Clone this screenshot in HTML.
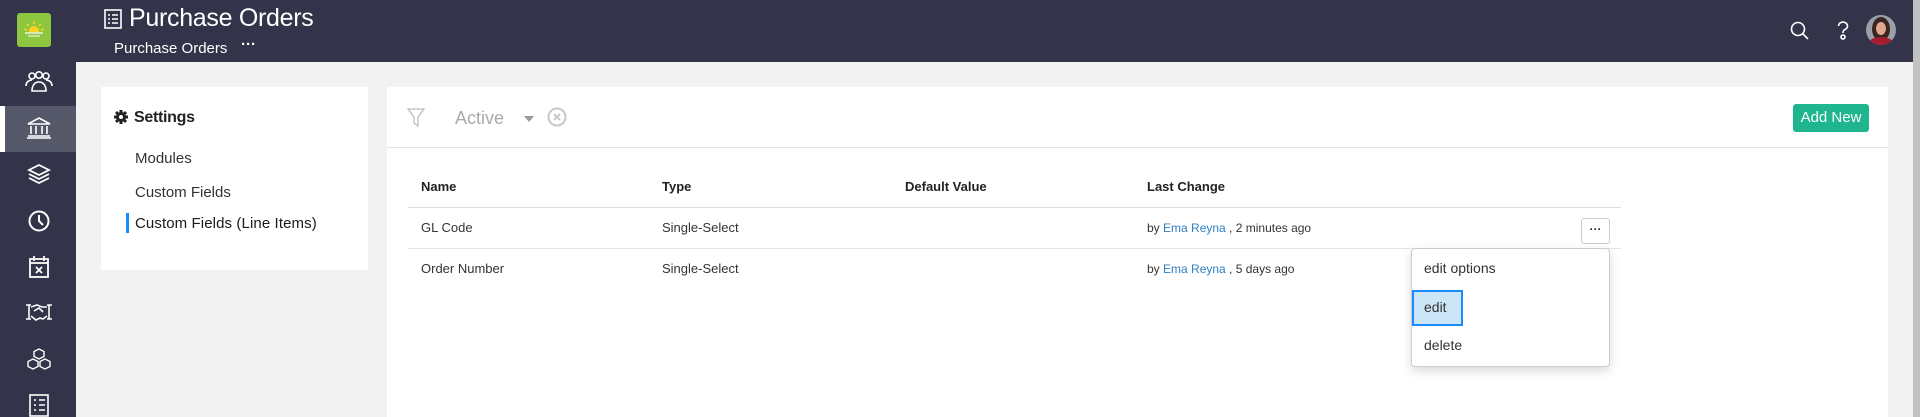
<!DOCTYPE html>
<html><head><meta charset="utf-8"><style>
*{margin:0;padding:0;box-sizing:border-box}
body{width:1920px;height:417px;overflow:hidden;background:#f2f2f2;font-family:"Liberation Sans",sans-serif;position:relative;color:#333}
.a{position:absolute}
.side{left:0;top:0;width:76px;height:417px;background:#33334a}
.hdr{left:0;top:0;width:1913px;height:62px;background:#33334a}
.t{position:absolute;white-space:nowrap}
</style></head><body>
<div class="a hdr"></div>
<div class="a side"></div>
<div class="a" style="left:17px;top:13px;width:34px;height:34px;background:#8dc63f;border-radius:3px"></div>
<svg class="a" style="left:22px;top:20px" width="24" height="20" viewBox="0 0 24 20"><circle cx="12" cy="11" r="5" fill="#ffd21f"/><g stroke="#ffd21f" stroke-width="1.5"><line x1="12" y1="1" x2="12" y2="4"/><line x1="5" y1="4" x2="7" y2="6"/><line x1="19" y1="4" x2="17" y2="6"/><line x1="2" y1="9" x2="5" y2="10"/><line x1="22" y1="9" x2="19" y2="10"/></g><rect x="2" y="12" width="20" height="8" fill="#8dc63f"/><line x1="3" y1="13" x2="21" y2="13" stroke="#fff" stroke-width="1.2"/><line x1="6" y1="16" x2="18" y2="16" stroke="#fff" stroke-width="1"/></svg>
<div class="a" style="left:0;top:106px;width:76px;height:46px;background:#545869"></div>
<div class="a" style="left:0;top:106px;width:5px;height:46px;background:#fff"></div>
<svg class="a" style="left:24px;top:71px" width="30" height="24" viewBox="0 0 30 24" fill="none" stroke="#fff" stroke-width="1.6"><circle cx="8" cy="5" r="3"/><circle cx="15" cy="4" r="3.2"/><circle cx="22" cy="5" r="3"/><path d="M2 15c0-4 3-6 6-6M28 15c0-4-3-6-6-6M8 20c0-6 3-9 7-9s7 3 7 9z"/></svg>
<svg class="a" style="left:26px;top:117px" width="26" height="22" viewBox="0 0 26 22" fill="none" stroke="#fff" stroke-width="1.6"><path d="M2 7L13 1l11 6z"/><path d="M5 9v8M10 9v8M16 9v8M21 9v8M2 19h22M1 21h24"/></svg>
<svg class="a" style="left:27px;top:163px" width="24" height="22" viewBox="0 0 24 22" fill="none" stroke="#fff" stroke-width="1.8"><path d="M12 2l10 5-10 5L2 7z"/><path d="M2 11l10 5 10-5M2 15l10 5 10-5"/></svg>
<svg class="a" style="left:27px;top:209px" width="24" height="24" viewBox="0 0 24 24" fill="none" stroke="#fff" stroke-width="2"><circle cx="12" cy="12" r="9.5"/><path d="M12 6v6l4 4"/></svg>
<svg class="a" style="left:28px;top:255px" width="22" height="24" viewBox="0 0 22 24" fill="none" stroke="#fff" stroke-width="1.8"><rect x="2" y="4" width="18" height="18"/><path d="M6 1v5M16 1v5M2 8h18M8 12l6 6M14 12l-6 6"/></svg>
<svg class="a" style="left:25px;top:302px" width="28" height="20" viewBox="0 0 28 20" fill="none" stroke="#fff" stroke-width="1.6"><path d="M1 3h5M1 17h5M4 3v14M22 3h5M22 17h5M24 3v14M6 5l6-2 5 2 5 0M6 14l5 4 4-2 3 1 4-3M9 9l5-3 4 4"/></svg>
<svg class="a" style="left:27px;top:348px" width="24" height="22" viewBox="0 0 24 22" fill="none" stroke="#fff" stroke-width="1.4"><path d="M12 1l5 2.5v5L12 11 7 8.5v-5zM6 11l5 2.5v5L6 21 1 18.5v-5zM18 11l5 2.5v5L18 21l-5-2.5v-5z"/></svg>
<svg class="a" style="left:29px;top:394px" width="20" height="23" viewBox="0 0 20 23" fill="none" stroke="#fff" stroke-width="1.6"><rect x="1" y="1" width="18" height="21"/><path d="M5 6h2M10 6h6M5 11h2M10 11h6M5 16h2M10 16h6"/></svg>

<svg class="a" style="left:104px;top:9px" width="18" height="20" viewBox="0 0 18 20" fill="none" stroke="#fff" stroke-width="1.6"><rect x="1" y="1" width="16" height="18"/><path d="M4 6h2M8 6h6M4 10h2M8 10h6M4 14h2M8 14h6"/></svg>
<div class="t" style="left:129px;top:4px;font-size:25px;color:#fff;letter-spacing:-0.3px">Purchase Orders</div>
<div class="t" style="left:114px;top:40px;font-size:15px;color:#fff">Purchase Orders</div>
<div class="t" style="left:241px;top:36px;font-size:15px;color:#fff;font-weight:bold;letter-spacing:0px">···</div>
<svg class="a" style="left:1790px;top:21px" width="20" height="20" viewBox="0 0 20 20" fill="none" stroke="#fff" stroke-width="1.6"><circle cx="8" cy="8" r="6.5"/><path d="M13 13l5 5"/></svg>
<svg class="a" style="left:1836px;top:21px" width="14" height="20" viewBox="0 0 14 20" fill="none" stroke="#fff" stroke-width="1.6"><path d="M2.5 5a4.5 4 0 1 1 6 3.8C7 9.5 7 11 7 12"/><circle cx="7" cy="16" r="2"/></svg>
<div class="a" style="left:1866px;top:15px;width:30px;height:30px;border-radius:50%;overflow:hidden;background:#9aa0a8">
<div class="a" style="left:6px;top:2px;width:18px;height:24px;border-radius:50%;background:#3a2520"></div>
<div class="a" style="left:10px;top:7px;width:10px;height:13px;border-radius:50%;background:#e0a98e"></div>
<div class="a" style="left:3px;top:22px;width:24px;height:12px;border-radius:50%;background:#a51c2c"></div>
</div>
<div class="a" style="left:1913px;top:0;width:7px;height:417px;background:#c1c1c1"></div>

<div class="a" style="left:101px;top:87px;width:267px;height:183px;background:#fff"></div>
<svg class="a" style="left:114px;top:110px" width="14" height="14" viewBox="0 0 14 14"><circle cx="7" cy="7" r="5" fill="#222"/><g stroke="#222" stroke-width="3"><line x1="7" y1="0" x2="7" y2="14"/><line x1="0" y1="7" x2="14" y2="7"/><line x1="2" y1="2" x2="12" y2="12"/><line x1="12" y1="2" x2="2" y2="12"/></g><circle cx="7" cy="7" r="2" fill="#fff"/></svg>
<div class="t" style="left:134px;top:109px;font-size:16px;color:#222;font-weight:bold;letter-spacing:-0.3px">Settings</div>
<div class="t" style="left:135px;top:150px;font-size:15px;color:#333">Modules</div>
<div class="t" style="left:135px;top:184px;font-size:15px;color:#333">Custom Fields</div>
<div class="a" style="left:126px;top:213px;width:3px;height:20px;background:#1a8cff"></div>
<div class="t" style="left:135px;top:215px;font-size:15px;color:#1a1a1a;letter-spacing:0.1px">Custom Fields (Line Items)</div>

<div class="a" style="left:387px;top:87px;width:1501px;height:330px;background:#fff"></div>
<div class="a" style="left:387px;top:147px;width:1501px;height:1px;background:#e5e5e5"></div>
<svg class="a" style="left:407px;top:108px" width="18" height="20" viewBox="0 0 18 20" fill="none" stroke="#bbb" stroke-width="1.3"><path d="M1 1h16l-6 8v9l-4-3V9z"/></svg>
<div class="t" style="left:455px;top:108px;font-size:18px;color:#aaa">Active</div>
<svg class="a" style="left:524px;top:116px" width="10" height="6"><path d="M0 0h10L5 6z" fill="#999"/></svg>
<svg class="a" style="left:547px;top:107px" width="20" height="20" viewBox="0 0 20 20" fill="none" stroke="#c8c8c8" stroke-width="2"><circle cx="10" cy="10" r="8.5"/><path d="M7 7l6 6M13 7l-6 6"/></svg>
<div class="a" style="left:1793px;top:104px;width:76px;height:28px;background:#1fb58f;border-radius:3px;color:#fff;font-size:15px;text-align:center;line-height:28px">Add New</div>

<div class="t" style="left:421px;top:179px;font-size:13px;color:#222;font-weight:bold">Name</div>
<div class="t" style="left:662px;top:179px;font-size:13px;color:#222;font-weight:bold">Type</div>
<div class="t" style="left:905px;top:179px;font-size:13px;color:#222;font-weight:bold">Default Value</div>
<div class="t" style="left:1147px;top:179px;font-size:13px;color:#222;font-weight:bold">Last Change</div>
<div class="a" style="left:408px;top:207px;width:1213px;height:1px;background:#ddd"></div>
<div class="t" style="left:421px;top:220px;font-size:13px">GL Code</div>
<div class="t" style="left:662px;top:220px;font-size:13px">Single-Select</div>
<div class="t" style="left:1147px;top:221px;font-size:12px">by <span style="color:#2f7fc1">Ema Reyna</span> , 2 minutes ago</div>
<div class="a" style="left:408px;top:248px;width:1213px;height:1px;background:#e5e5e5"></div>
<div class="t" style="left:421px;top:261px;font-size:13px">Order Number</div>
<div class="t" style="left:662px;top:261px;font-size:13px">Single-Select</div>
<div class="t" style="left:1147px;top:262px;font-size:12px">by <span style="color:#2f7fc1">Ema Reyna</span> , 5 days ago</div>
<div class="a" style="left:1581px;top:218px;width:29px;height:26px;border:1px solid #ccc;border-radius:3px;text-align:center;font-size:12px;font-weight:bold;line-height:20px">···</div>
<div class="a" style="left:1411px;top:248px;width:199px;height:119px;background:#fff;border:1px solid #ccc;border-radius:4px;box-shadow:0 4px 10px rgba(0,0,0,.15)"></div>
<div class="t" style="left:1424px;top:260px;font-size:14px">edit options</div>
<div class="a" style="left:1412px;top:290px;width:51px;height:36px;background:#cde6f7;border:2px solid #1a8cff"></div>
<div class="t" style="left:1424px;top:299px;font-size:14px">edit</div>
<div class="t" style="left:1424px;top:337px;font-size:14px">delete</div>
</body></html>
